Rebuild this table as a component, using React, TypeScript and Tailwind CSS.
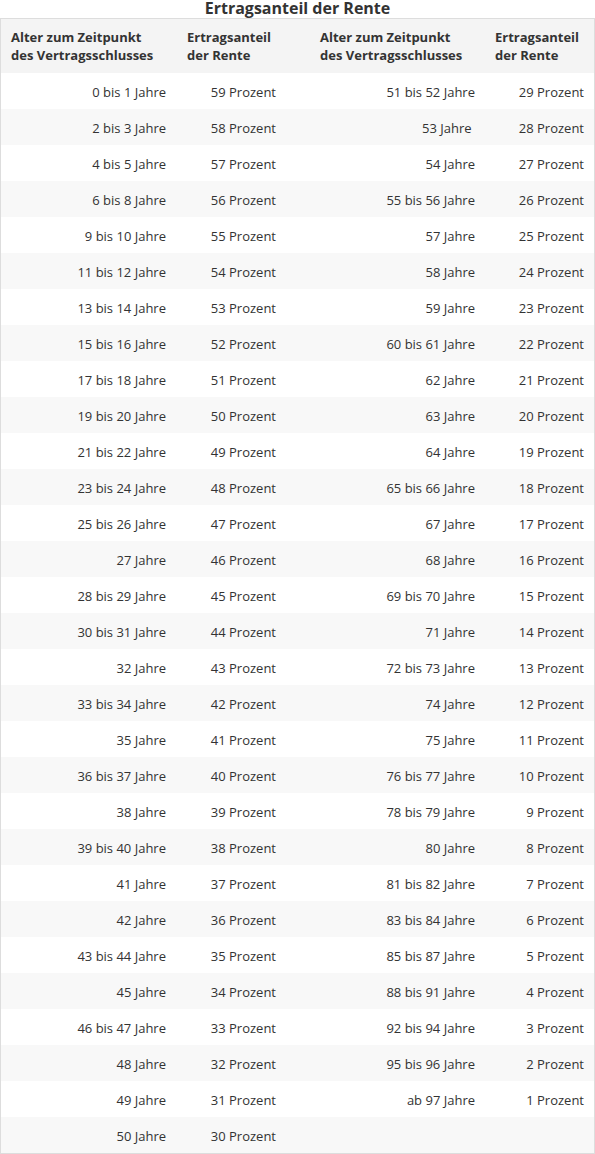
const left: [string, string][] = [
  ["0 bis 1 Jahre", "59 Prozent"],
  ["2 bis 3 Jahre", "58 Prozent"],
  ["4 bis 5 Jahre", "57 Prozent"],
  ["6 bis 8 Jahre", "56 Prozent"],
  ["9 bis 10 Jahre", "55 Prozent"],
  ["11 bis 12 Jahre", "54 Prozent"],
  ["13 bis 14 Jahre", "53 Prozent"],
  ["15 bis 16 Jahre", "52 Prozent"],
  ["17 bis 18 Jahre", "51 Prozent"],
  ["19 bis 20 Jahre", "50 Prozent"],
  ["21 bis 22 Jahre", "49 Prozent"],
  ["23 bis 24 Jahre", "48 Prozent"],
  ["25 bis 26 Jahre", "47 Prozent"],
  ["27 Jahre", "46 Prozent"],
  ["28 bis 29 Jahre", "45 Prozent"],
  ["30 bis 31 Jahre", "44 Prozent"],
  ["32 Jahre", "43 Prozent"],
  ["33 bis 34 Jahre", "42 Prozent"],
  ["35 Jahre", "41 Prozent"],
  ["36 bis 37 Jahre", "40 Prozent"],
  ["38 Jahre", "39 Prozent"],
  ["39 bis 40 Jahre", "38 Prozent"],
  ["41 Jahre", "37 Prozent"],
  ["42 Jahre", "36 Prozent"],
  ["43 bis 44 Jahre", "35 Prozent"],
  ["45 Jahre", "34 Prozent"],
  ["46 bis 47 Jahre", "33 Prozent"],
  ["48 Jahre", "32 Prozent"],
  ["49 Jahre", "31 Prozent"],
  ["50 Jahre", "30 Prozent"],
];

const right: [string, string][] = [
  ["51 bis 52 Jahre", "29 Prozent"],
  ["53 Jahre\u00a0", "28 Prozent"],
  ["54 Jahre", "27 Prozent"],
  ["55 bis 56 Jahre", "26 Prozent"],
  ["57 Jahre", "25 Prozent"],
  ["58 Jahre", "24 Prozent"],
  ["59 Jahre", "23 Prozent"],
  ["60 bis 61 Jahre", "22 Prozent"],
  ["62 Jahre", "21 Prozent"],
  ["63 Jahre", "20 Prozent"],
  ["64 Jahre", "19 Prozent"],
  ["65 bis 66 Jahre", "18 Prozent"],
  ["67 Jahre", "17 Prozent"],
  ["68 Jahre", "16 Prozent"],
  ["69 bis 70 Jahre", "15 Prozent"],
  ["71 Jahre", "14 Prozent"],
  ["72 bis 73 Jahre", "13 Prozent"],
  ["74 Jahre", "12 Prozent"],
  ["75 Jahre", "11 Prozent"],
  ["76 bis 77 Jahre", "10 Prozent"],
  ["78 bis 79 Jahre", "9 Prozent"],
  ["80 Jahre", "8 Prozent"],
  ["81 bis 82 Jahre", "7 Prozent"],
  ["83 bis 84 Jahre", "6 Prozent"],
  ["85 bis 87 Jahre", "5 Prozent"],
  ["88 bis 91 Jahre", "4 Prozent"],
  ["92 bis 94 Jahre", "3 Prozent"],
  ["95 bis 96 Jahre", "2 Prozent"],
  ["ab 97 Jahre", "1 Prozent"],
  ["", ""],
];

const cols = "grid grid-cols-[175px_134px_175px_109px]";

export default function App() {
  return (
    <div className="w-[595px] bg-white font-['Open_Sans',sans-serif] text-[13px] text-[#333]">
      <h2 className="h-[18px] text-center text-[16px] font-bold leading-[16px]">
        Ertragsanteil der Rente
      </h2>

      <div className="border border-[#ddd]">
        <div className={`${cols} h-[54px] items-center bg-[#f4f4f4] font-bold leading-[18px]`}>
          <div className="pl-[10px]">
            Alter zum Zeitpunkt
            <br />
            des Vertragsschlusses
          </div>
          <div className="pl-[11px]">
            Ertragsanteil
            <br />
            der Rente
          </div>
          <div className="pl-[10px]">
            Alter zum Zeitpunkt
            <br />
            des Vertragsschlusses
          </div>
          <div className="pl-[10px]">
            Ertragsanteil
            <br />
            der Rente
          </div>
        </div>

        {left.map((row, i) => (
          <div
            key={i}
            className={`${cols} h-[36px] items-center pt-[3px] ${i % 2 === 1 ? "bg-[#f8f8f8]" : "bg-white"}`}
          >
            <div className="pr-[10px] text-right">{row[0]}</div>
            <div className="pr-[34px] text-right">{row[1]}</div>
            <div className="pr-[10px] text-right">{right[i][0]}</div>
            <div className="pr-[10px] text-right">{right[i][1]}</div>
          </div>
        ))}
      </div>
    </div>
  );
}
